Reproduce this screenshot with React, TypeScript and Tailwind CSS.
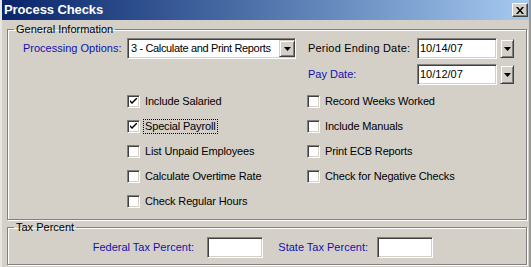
import React from "react";

const font = { fontFamily: '"Liberation Sans", Arial, sans-serif' };

function Sunken({ className = "", children }: { className?: string; children?: React.ReactNode }) {
  return (
    <div
      className={`border border-t-[#808080] border-l-[#808080] border-b-white border-r-white shadow-[inset_1px_1px_0_#404040,inset_-1px_-1px_0_#d4d0c8] bg-white ${className}`}
    >
      {children}
    </div>
  );
}

function DropBtn({ className = "" }: { className?: string }) {
  return (
    <div
      className={`flex items-center justify-center bg-[#d4d0c8] border border-t-[#d4d0c8] border-l-[#d4d0c8] border-b-[#404040] border-r-[#404040] shadow-[inset_1px_1px_0_#fff,inset_-1px_-1px_0_#808080] ${className}`}
    >
      <svg width="7" height="4" viewBox="0 0 7 4">
        <path d="M0 0H7L3.5 4Z" fill="#000" />
      </svg>
    </div>
  );
}

function Check({ label, checked = false, focus = false }: { label: string; checked?: boolean; focus?: boolean }) {
  return (
    <div className="flex items-center h-[25px]">
      <div className="w-[13px] h-[13px] border border-t-[#808080] border-l-[#808080] border-b-white border-r-white shadow-[inset_1px_1px_0_#404040,inset_-1px_-1px_0_#d4d0c8] bg-white flex items-center justify-center">
        {checked && (
          <svg width="7" height="7" viewBox="0 0 7 7">
            <path d="M0 2V4L2 6L7 1V-1L2 4Z" fill="#000" />
          </svg>
        )}
      </div>
      <span
        className={`ml-[4px] px-[1px] leading-[13px] text-[11px] text-black tracking-[-0.15px] ${focus ? "outline outline-1 outline-dotted outline-black" : ""}`}
      >
        {label}
      </span>
    </div>
  );
}

export default function App() {
  return (
    <div
      className="w-[531px] h-[267px] bg-[#d4d0c8] flex flex-col overflow-hidden border-l-[2px] border-l-[#e8e6e2] border-r-[2px] border-r-[#9a9892]"
      style={font}
    >
      <div className="h-[20px] flex items-center justify-between bg-gradient-to-r from-[#0a246a] to-[#a6caf0] pl-[2px] pr-[1px]">
        <span className="text-white font-bold text-[13px] leading-[16px] tracking-[-0.1px]">Process Checks</span>
        <div className="w-[16px] h-[14px] flex items-center justify-center bg-[#d4d0c8] border border-t-white border-l-white border-b-[#404040] border-r-[#404040] shadow-[inset_-1px_-1px_0_#808080]">
          <svg width="8" height="7" viewBox="0 0 8 7">
            <path d="M0 0H2L4 2.5L6 0H8L5 3.5L8 7H6L4 4.5L2 7H0L3 3.5Z" fill="#000" />
          </svg>
        </div>
      </div>

      <div className="flex flex-col pl-[5px] pr-[2px] pt-[3px] text-[11px]">
        <fieldset className="border border-[#808080] shadow-[inset_1px_1px_0_#fff,1px_1px_0_#fff] pb-[5px]">
          <legend className="ml-[6px] px-[2px] leading-[13px] text-[11px] text-black">General Information</legend>
          <div className="flex items-center h-[21px] mt-[2px]">
            <span className="w-[119px] shrink-0 pl-[15px] text-[#1010b0] whitespace-nowrap">Processing Options:</span>
            <Sunken className="w-[169px] shrink-0 h-[21px] flex items-center">
              <span className="flex-1 min-w-0 pl-[3px] whitespace-nowrap overflow-hidden tracking-[-0.35px]">3 - Calculate and Print Reports</span>
              <DropBtn className="w-[16px] shrink-0 h-[17px]" />
            </Sunken>
            <span className="w-[109px] shrink-0 ml-[12px] text-black whitespace-nowrap tracking-[0.2px]">Period Ending Date:</span>
            <Sunken className="w-[80px] shrink-0 h-[21px] flex items-center pl-[2px]">10/14/07</Sunken>
            <DropBtn className="w-[14px] shrink-0 h-[19px] ml-[3px]" />
          </div>
          <div className="flex items-center h-[21px] mt-[5px]">
            <span className="w-[109px] shrink-0 ml-[300px] text-[#1010b0]">Pay Date:</span>
            <Sunken className="w-[80px] shrink-0 h-[21px] flex items-center pl-[2px]">10/12/07</Sunken>
            <DropBtn className="w-[14px] shrink-0 h-[19px] ml-[3px]" />
          </div>
          <div className="flex mt-[4px]">
            <div className="flex flex-col w-[180px] shrink-0 ml-[119px]">
              <Check label="Include Salaried" checked />
              <Check label="Special Payroll" checked focus />
              <Check label="List Unpaid Employees" />
              <Check label="Calculate Overtime Rate" />
              <Check label="Check Regular Hours" />
            </div>
            <div className="flex flex-col">
              <Check label="Record Weeks Worked" />
              <Check label="Include Manuals" />
              <Check label="Print ECB Reports" />
              <Check label="Check for Negative Checks" />
            </div>
          </div>
        </fieldset>

        <fieldset className="mt-[1px] border border-[#808080] shadow-[inset_1px_1px_0_#fff,1px_1px_0_#fff] pb-[6px]">
          <legend className="ml-[6px] px-[2px] leading-[13px] text-[11px] text-black">Tax Percent</legend>
          <div className="flex items-center h-[21px] mt-[3px]">
            <span className="w-[199px] shrink-0 text-right pr-[13px] text-[#1010b0] whitespace-nowrap">Federal Tax Percent:</span>
            <Sunken className="w-[56px] shrink-0 h-[21px]" />
            <span className="w-[114px] shrink-0 text-right pr-[9px] text-[#1010b0] whitespace-nowrap">State Tax Percent:</span>
            <Sunken className="w-[56px] shrink-0 h-[21px]" />
          </div>
        </fieldset>
      </div>
    </div>
  );
}
